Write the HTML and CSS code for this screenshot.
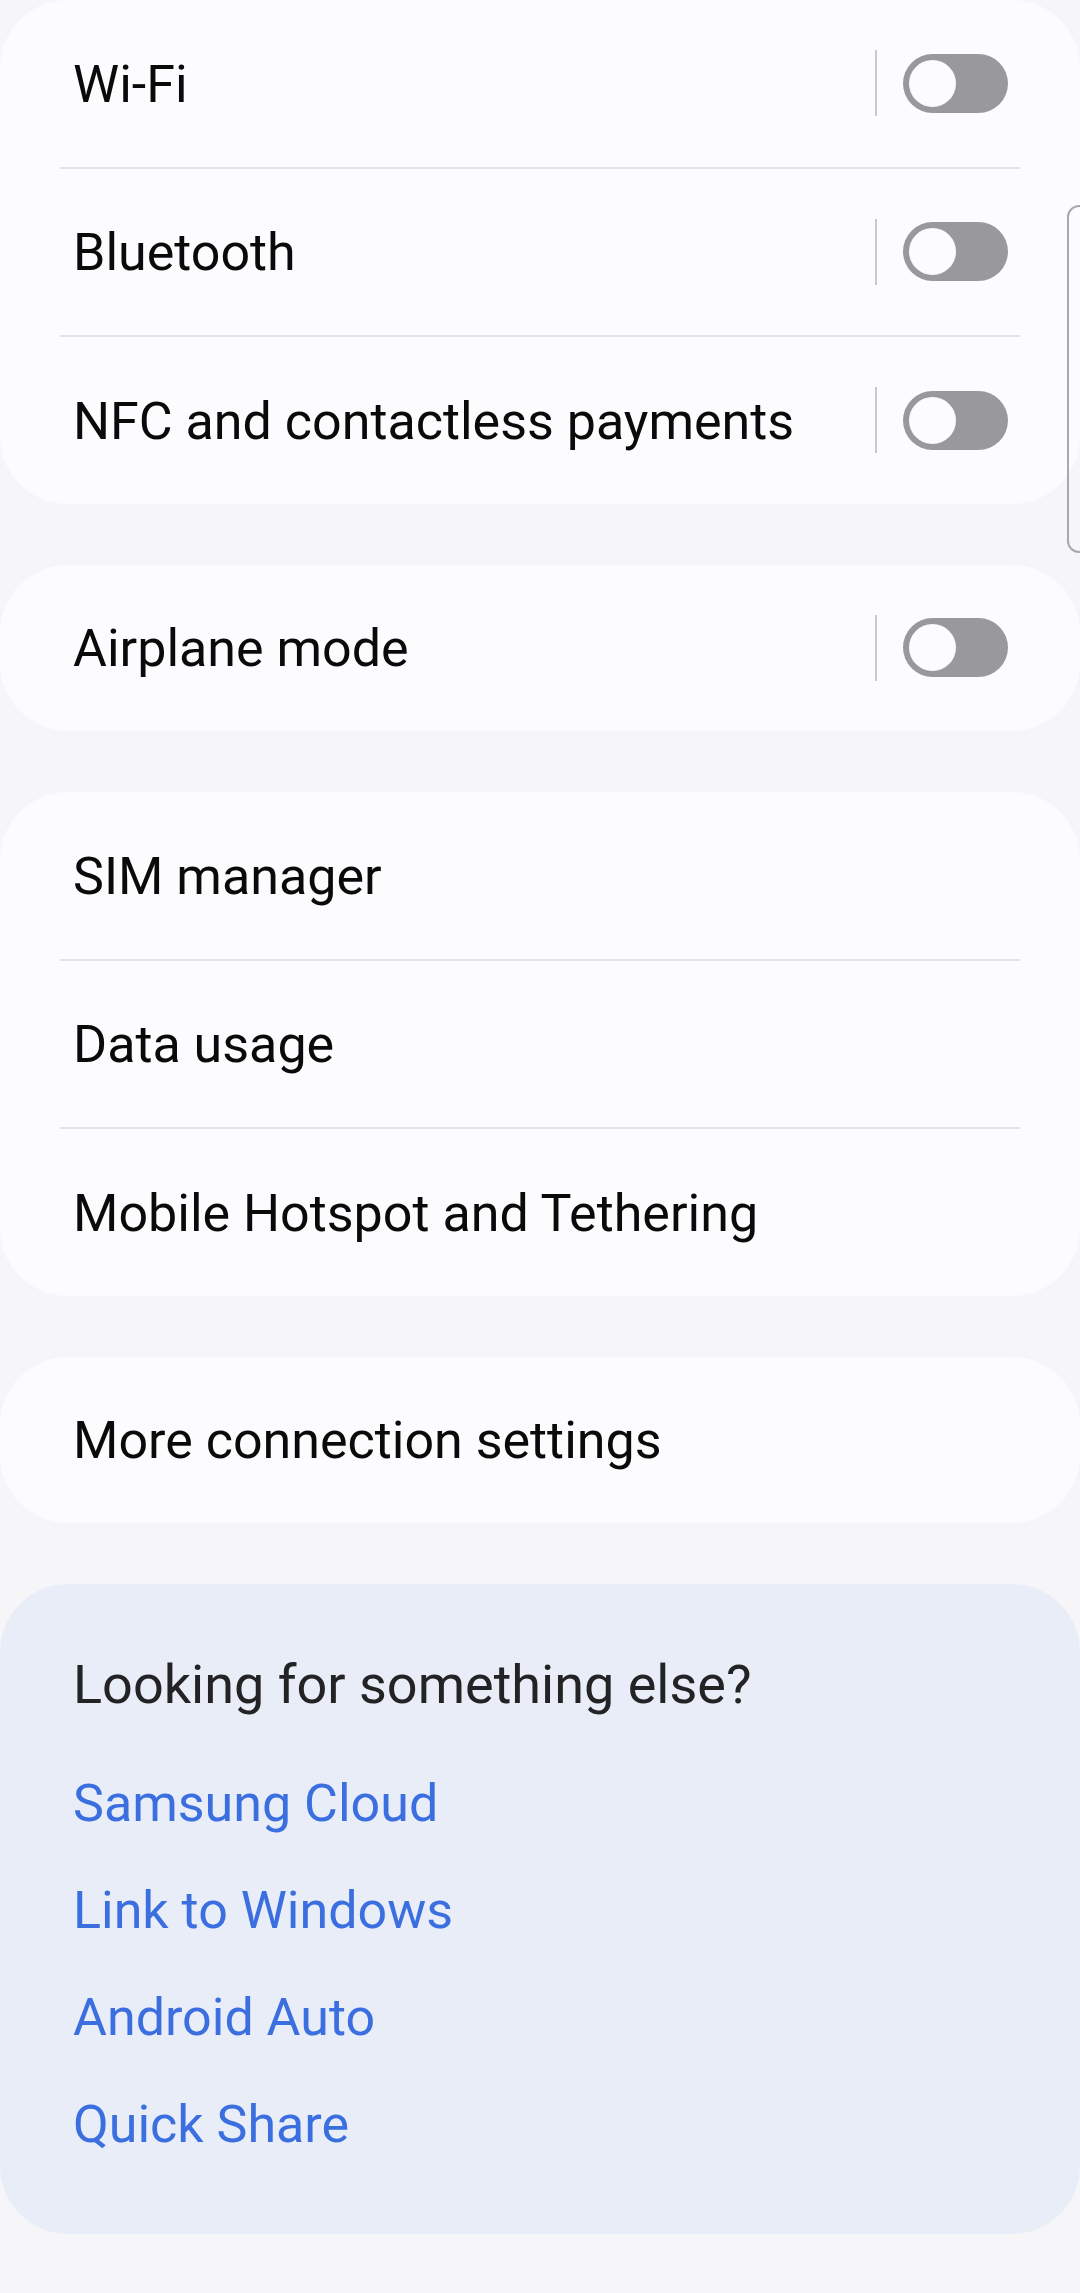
FILE: index.html
```html
<!DOCTYPE html>
<html lang="en">
<head>
<meta charset="utf-8">
<title>Connections</title>
<link rel="stylesheet" href="styles.css">
</head>
<body>
<main class="page">
  <section class="card">
    <div class="row">
      <span class="label">Wi-Fi</span>
      <span class="switch-wrap"><span class="sep"></span><span class="switch"><span class="thumb"></span></span></span>
    </div>
    <div class="divider"></div>
    <div class="row">
      <span class="label">Bluetooth</span>
      <span class="switch-wrap"><span class="sep"></span><span class="switch"><span class="thumb"></span></span></span>
    </div>
    <div class="divider"></div>
    <div class="row">
      <span class="label">NFC and contactless payments</span>
      <span class="switch-wrap"><span class="sep"></span><span class="switch"><span class="thumb"></span></span></span>
    </div>
  </section>

  <section class="card">
    <div class="row">
      <span class="label">Airplane mode</span>
      <span class="switch-wrap"><span class="sep"></span><span class="switch"><span class="thumb"></span></span></span>
    </div>
  </section>

  <section class="card">
    <div class="row"><span class="label">SIM manager</span></div>
    <div class="divider"></div>
    <div class="row"><span class="label">Data usage</span></div>
    <div class="divider"></div>
    <div class="row"><span class="label">Mobile Hotspot and Tethering</span></div>
  </section>

  <section class="card">
    <div class="row"><span class="label">More connection settings</span></div>
  </section>

  <section class="card suggest">
    <h2 class="suggest-title">Looking for something else?</h2>
    <a class="suggest-link" href="#">Samsung Cloud</a>
    <a class="suggest-link" href="#">Link to Windows</a>
    <a class="suggest-link" href="#">Android Auto</a>
    <a class="suggest-link" href="#">Quick Share</a>
  </section>
</main>
<div class="scroller"></div>
</body>
</html>
```
FILE: styles.css
```css
html, body {
  margin: 0;
  padding: 0;
}
body {
  background: #f6f6f8;
  font-family: Roboto, "Noto Sans", sans-serif;
  width: 1080px;
  height: 2293px;
  overflow: hidden;
  position: relative;
}
.page {
  display: flex;
  flex-direction: column;
  gap: 61px;
}
.card {
  background: #fcfcfe;
  border-radius: 68px;
  display: flex;
  flex-direction: column;
}
.row {
  height: 166.5px;
  box-sizing: border-box;
  padding: 3px 72px 0 73px;
  display: flex;
  align-items: center;
  justify-content: space-between;
}
.label {
  font-size: 52px;
  color: #0a0a0a;
  line-height: 1;
  white-space: nowrap;
}
.divider {
  height: 2px;
  background: #e4e4e6;
  margin: 0 60px;
}
.switch-wrap {
  display: flex;
  align-items: center;
  gap: 26px;
  margin-top: -3px;
}
.sep {
  width: 2px;
  height: 66px;
  background: #cacacc;
}
.switch {
  width: 105px;
  height: 59px;
  border-radius: 30px;
  background: #99999d;
  box-sizing: border-box;
  padding: 6px;
  display: flex;
}
.thumb {
  width: 47px;
  height: 47px;
  border-radius: 50%;
  background: #fcfcfe;
}
.suggest {
  background: #e8edf8;
  padding: 47px 73px 56px 73px;
}
.suggest-title {
  margin: 0 0 12px 0;
  font-weight: 400;
  font-size: 54px;
  line-height: 107px;
  color: #232325;
}
.suggest-link {
  display: block;
  font-size: 52px;
  line-height: 107px;
  color: #3b6fe0;
  text-decoration: none;
}
.scroller {
  position: absolute;
  left: 1067px;
  top: 205px;
  width: 24px;
  height: 344px;
  border: 2px solid #a9a9ab;
  border-radius: 12px;
}
```
